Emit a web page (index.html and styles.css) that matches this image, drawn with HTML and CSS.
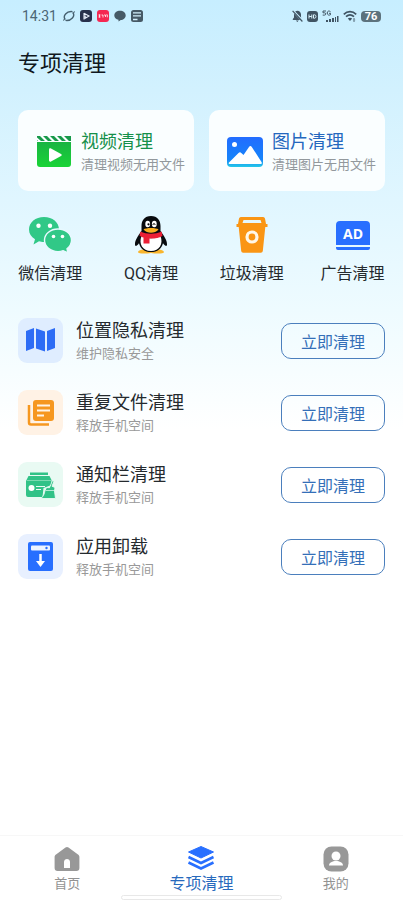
FILE: index.html
```html
<!DOCTYPE html>
<html lang="zh-CN">
<head>
<meta charset="utf-8">
<meta name="viewport" content="width=device-width, initial-scale=1">
<title>专项清理</title>
<link rel="stylesheet" href="styles.css">
</head>
<body>
<div class="page">
  <header class="status">
    <div class="status-group">
      <span class="time">14:31</span>
      <svg width="12" height="12" viewBox="0 0 12 12" fill="none" stroke="#46606f"><path d="M2.200 9.500C-.5 6 3.500.8 9.500 1.600M9.800 2.500C12.500 6 8.500 11.200 2.500 10.400" stroke-width="1.400"/><path d="M.8 10.800c-.8-1 .2-2 1.400-1.300M11.200 1.200c.8 1-.2 2-1.400 1.300" stroke-width=".9"/></svg>
      <svg width="12" height="12" viewBox="0 0 12 12"><rect width="12" height="12" rx="3" fill="#28304c"/><path d="M4 3v6.500M4 3.200L9 6 5.200 8.300V5.500" fill="none" stroke="#e8edfa" stroke-width="1.100"/></svg>
      <svg width="12" height="12" viewBox="0 0 12 12"><rect width="12" height="12" rx="3" fill="#f52752"/><path d="M1.500 5h2M1.500 7h2M2.500 4.500v3M4.500 5h1.500v2.500M7 5h1.500v2M9.300 4.800h1v2.500" fill="none" stroke="#fff" stroke-width=".8"/></svg>
      <svg width="12" height="12" viewBox="0 0 12 12"><path d="M6 .8c3.200 0 5.700 2 5.700 4.600S9.200 10 6.800 10L4.500 11.600V9.800C2 9.300.3 7.600.3 5.400.3 2.800 2.800.8 6 .8z" fill="#465965"/></svg>
      <svg width="12" height="12" viewBox="0 0 12 12"><rect width="12" height="12" rx="2.500" fill="#465965"/><path d="M2 2.800h8M2 5.800h8M2 9.500h4.500" stroke="#d2effb" stroke-width="1.300"/></svg>
    </div>
    <div class="status-group status-right">
      <svg width="11" height="12" viewBox="0 0 11 12"><path d="M3.200 1.500C5.500-.2 9 1.200 9 4.500v2.700l.7 1zM2 3.500L8.200 10H.8V9L2 7.500zM3.800 10.600h3L5.300 12z" fill="#405463"/><path d="M.6.8l9.800 10.700" stroke="#405463" stroke-width="1.200"/></svg>
      <svg width="11" height="11" viewBox="0 0 11 11"><rect width="11" height="11" rx="3" fill="#405463"/><path d="M2 3.500v4M4.800 3.500v4M2 5.500h2.800M6.500 3.800v3.400h1.200c1.700 0 1.700-3.400 0-3.400z" fill="none" stroke="#d8f1fb"/></svg>
      <svg width="17" height="13" viewBox="0 0 17 13"><path d="M4 1H1v1.800h1.500c1.700 0 1.700 2.300 0 2.300H.7M8.500 1.700C7 .4 5.200 1.100 5.200 3s1.800 2.700 3.300 1.700V3.300H7" fill="none" stroke="#405463"/><path d="M4 10h2v2H4zM7 9h2v3H7zM10 8h2v4h-2zM13 7h1v5h-1zM15 6h1.500v6H15z" fill="#405463"/></svg>
      <svg width="14" height="12" viewBox="0 0 14 12"><path d="M.8 4.300C4.500.7 9.500.7 13.200 4.300M3 6.700c2.400-2.200 5.600-2.200 8 0" fill="none" stroke="#405463" stroke-width="1.700"/><path d="M4.800 8.600c1.400-1 3-1 4.400 0L7 11zM11 8l1.400 1.500H9.800zM11 12l1.400-1.500H9.800z" fill="#405463"/></svg>
      <span class="battery">76</span>
    </div>
  </header>

  <main>
    <h1>专项清理</h1>

    <section class="cards">
      <a class="card" href="#video">
        <svg width="38" height="38" viewBox="0 0 38 38">
          <defs><linearGradient id="green" x2="0" y2="1"><stop stop-color="#19b443"/><stop offset="1" stop-color="#19d436"/></linearGradient></defs>
          <path d="M2 9h34v22a3 3 0 0 1-3 3H5a3 3 0 0 1-3-3z" fill="url(#green)"/>
          <path d="M2 3h3l5 5H6L2 4.500zM8 3h4l5 5h-4zM15 3h4l5 5h-4zM22 3h4l5 5h-4zM29 3h7v5h-2zM2 7l1 1H2z" fill="#17994a"/>
          <path d="M14 16.500c0-1 1-1.500 2-1l10 5.500c1 .6 1 1.400 0 2l-10 5.500c-1 .5-2 0-2-1z" fill="#fff"/>
        </svg>
        <span class="copy"><b class="green">视频清理</b><small>清理视频无用文件</small></span>
      </a>
      <a class="card" href="#image">
        <svg width="38" height="38" viewBox="0 0 38 38">
          <defs><linearGradient id="sky" x2="0" y2="1"><stop stop-color="#226cff"/><stop offset=".75" stop-color="#1684fa"/><stop offset="1" stop-color="#25c9e8"/></linearGradient></defs>
          <rect x="1" y="4" width="36" height="30" rx="4" fill="url(#sky)"/>
          <circle cx="8.500" cy="11.500" r="2.500" fill="#fff"/>
          <path d="M3.500 31c-1 0-1-1-.5-1.600l9.500-9.500c1-.9 2-.9 2.800 0l2.200 2 5.500-8c.8-1.100 2-1.100 2.800 0L35.500 29c.6 1 .2 2-.8 2z" fill="#fff"/>
        </svg>
        <span class="copy"><b class="blue">图片清理</b><small>清理图片无用文件</small></span>
      </a>
    </section>

    <nav class="quick" aria-label="快捷清理">
      <a href="#wechat">
        <svg width="44" height="38" viewBox="0 0 44 38">
          <path d="M16 1c8.500 0 15 5.400 15 12.500S24.500 26 16 26c-2 0-3.500-.2-5-.7L5.500 28.500 7 23.300C3.200 21 1 17.500 1 13.500 1 6.400 7.500 1 16 1z" fill="#31c887"/>
          <path d="M30 13c7.500 0 13.500 5 13.500 11.300 0 3.500-1.800 6.400-4.500 8.500l1 4.200-4.800-2.300c-1.600.6-3.400.9-5.200.9-7.500 0-13.500-5-13.500-11.300S22.500 13 30 13z" fill="#31c887" stroke="#e8f9ff" stroke-width="1.400"/>
          <g fill="#fff"><circle cx="10.500" cy="9.700" r="2.200"/><circle cx="22" cy="9.700" r="2.200"/><circle cx="25.500" cy="20.500" r="1.800"/><circle cx="34.500" cy="20.500" r="1.800"/></g>
        </svg>
        <span>微信清理</span>
      </a>
      <a href="#qq">
        <svg width="34" height="38" viewBox="0 0 34 38">
          <path d="M4 36.300c0-2.500 5-3.300 13-3.300s13 .8 13 3.300c0 1.500-8 1.700-13 .7-5 1-13 .8-13-.7z" fill="#f9b52d"/>
          <path d="M17 0C10.500 0 7.500 4.500 7.500 10v5C4 20 1 24 1 28c0 3 1.500 2.500 4-.8C6.500 33 10.500 36 17 36s10.500-3 12-8.800c2.500 3.300 4 3.800 4 .8 0-4-3-8-6.500-13v-5C26.500 4.500 23.500 0 17 0z" fill="#080b0e"/>
          <path d="M7.500 20c5 3 14 3 19 0 3 8-1 15-9.500 15S4.500 28 7.500 20z" fill="#fff"/>
          <ellipse cx="13.700" cy="8" rx="2.400" ry="3.300" fill="#fff"/><ellipse cx="20.300" cy="8" rx="2.400" ry="3.300" fill="#fff"/>
          <circle cx="14.500" cy="8.300" r="1.100"/><path d="M19 9c0-2 2-2 2 0" fill="none" stroke="#000"/>
          <path d="M9.500 13.500c2-2 13-2 15 0-2 2.500-4.500 3.200-7.500 3.200s-5.500-.7-7.500-3.200z" fill="#f8ae20"/>
          <path d="M6.500 15.500c6 3 15 3 21 0l1 4.500c-4 2-8 2.700-13 2.500v5H9.500v-6c-1.500-.4-2.500-1-4-2z" fill="#ec1f35"/>
        </svg>
        <span>QQ清理</span>
      </a>
      <a href="#trash">
        <svg width="34" height="38" viewBox="0 0 34 38">
          <path d="M6 1h22a2 2 0 0 1 2 1.500L31 8h1.500v3h-2.200l-2.500 24a2 2 0 0 1-2 1.800H8.200a2 2 0 0 1-2-1.800L3.700 11H1.500V8H3l1-5.500A2 2 0 0 1 6 1zM8.500 4L7.500 7h19l-1-3z" fill="#fa9514" fill-rule="evenodd"/>
          <circle cx="17" cy="21" r="5" fill="none" stroke="#fff7e8" stroke-width="3.200"/>
        </svg>
        <span>垃圾清理</span>
      </a>
      <a href="#ads">
        <svg width="34" height="38" viewBox="0 0 34 38">
          <path d="M4 5h26a4 4 0 0 1 4 4v20H0V9a4 4 0 0 1 4-4zM0 31h34v1a2 2 0 0 1-2 2H2a2 2 0 0 1-2-2z" fill="#286fff"/>
          <text class="ad" x="17" y="23" text-anchor="middle">AD</text>
        </svg>
        <span>广告清理</span>
      </a>
    </nav>

    <ul class="tasks">
      <li>
        <span class="tile tile-blue"><svg width="31" height="31" viewBox="0 0 31 31" fill="#2d6cf5"><path d="M1 6l8-3v20l-8 3zM11 3.500l9 3v20l-9-3zM22 6l8-3v20l-8 3z"/></svg></span>
        <div class="copy"><h2>位置隐私清理</h2><p>维护隐私安全</p></div>
        <button type="button">立即清理</button>
      </li>
      <li>
        <span class="tile tile-orange"><svg width="31" height="31" viewBox="0 0 31 31"><rect x="8" y="3" width="21" height="21" rx="3" fill="#f6971f"/><path d="M4 8v17.500a2 2 0 0 0 2 2h18" fill="none" stroke="#f6971f" stroke-width="2.500"/><path d="M12 8.500h13M12 13.500h13M12 18.500h7" stroke="#fff4e5" stroke-width="2"/></svg></span>
        <div class="copy"><h2>重复文件清理</h2><p>释放手机空间</p></div>
        <button type="button">立即清理</button>
      </li>
      <li>
        <span class="tile tile-green"><svg width="31" height="31" viewBox="0 0 31 31"><path d="M5 3.500h18v2.500H5zM3.500 7h21l2 4v5l-8 3-1 9H3a2 2 0 0 1-2-2V12z" fill="#31c287"/><path d="M2 11.500h24" stroke="#8fe0bd" stroke-width=".8"/><circle cx="6.500" cy="19" r="3" fill="#fff"/><path d="M11 17.500h9M11 20.500h5" stroke="#e9faf3"/><path d="M27.500 11.500l1.500.7-2 5 3 1.300-.5 3.500 1 7.500H16c2.500-2.500 3.500-5 4-8l1.500-3 3 .2z" fill="#31c287" stroke="#e9faf3" stroke-width=".9"/><path d="M20.500 21.500h9" stroke="#e9faf3" stroke-width=".7"/></svg></span>
        <div class="copy"><h2>通知栏清理</h2><p>释放手机空间</p></div>
        <button type="button">立即清理</button>
      </li>
      <li>
        <span class="tile tile-indigo"><svg width="31" height="31" viewBox="0 0 31 31"><rect x="3" y="1" width="25" height="29" rx="2" fill="#286fff"/><rect x="6" y="4.500" width="19" height="5" rx="1" fill="#edf4ff"/><circle cx="21.500" cy="7" r="1.200" fill="#286fff"/><path d="M15.500 13v9" stroke="#fff" stroke-width="2.500"/><path d="M11 20h9l-4.500 6z" fill="#fff"/></svg></span>
        <div class="copy"><h2>应用卸载</h2><p>释放手机空间</p></div>
        <button type="button">立即清理</button>
      </li>
    </ul>
  </main>

  <nav class="tabs" aria-label="主导航">
    <a href="#home">
      <svg width="28" height="28" viewBox="0 0 28 28"><path d="M12.500 2.500c1-.7 2-.7 3 0L25 9.500c1 .7 1.400 1.500 1.400 2.600V23a3 3 0 0 1-3 3H4.600a3 3 0 0 1-3-3V12.100c0-1.100.4-1.900 1.400-2.600z" fill="#989898"/><path d="M11 23v-6c0-4 6-4 6 0v6z" fill="#fff"/></svg>
      <span>首页</span>
    </a>
    <a class="active" href="#special" aria-current="page">
      <svg width="28" height="28" viewBox="0 0 28 28"><path d="M14 1.500L26.500 7 14 13 1.500 7z" fill="#286fff" stroke="#286fff" stroke-linejoin="round"/><path d="M1.500 12L14 18l12.500-6M1.500 17.500L14 23.500l12.500-6" fill="none" stroke="#286fff" stroke-width="2.500"/></svg>
      <span>专项清理</span>
    </a>
    <a href="#mine">
      <svg width="28" height="28" viewBox="0 0 28 28"><rect x="1.500" y="1.500" width="25" height="25" rx="8" fill="#989898"/><circle cx="14" cy="11" r="4.500" fill="#fff"/><path d="M7 20.500c0-6 14-6 14 0z" fill="#fff"/></svg>
      <span>我的</span>
    </a>
    <i class="handle"></i>
  </nav>
</div>
</body>
</html>
```
FILE: styles.css
```css
* { box-sizing: border-box; }
body {
  margin: 0;
  font-family: Roboto, "Noto Sans CJK SC", sans-serif;
  color: #252a2e;
}
a { color: inherit; text-decoration: none; }
svg { display: block; flex: none; }
.page {
  display: flex;
  flex-direction: column;
  min-height: 100vh;
  background: linear-gradient(#c7eeff 0, #d2f1fe 90px, #e0f6ff 200px, #eefbff 310px, #fff 430px);
}
main { flex: 1; }

.status {
  display: flex;
  justify-content: space-between;
  align-items: center;
  height: 32px;
  padding: 0 22px;
}
.status-group { display: flex; align-items: center; gap: 5px; }
.status-right { gap: 4px; }
.time { width: 36px; font-size: 14px; line-height: 20px; color: #4c6675; }
.battery {
  width: 20px;
  border-radius: 4px;
  background: #5c727d;
  color: #fff;
  font-size: 11px;
  font-weight: 700;
  line-height: 11px;
  text-align: center;
}

h1 {
  margin: 16px 18px 30px;
  font-size: 22px;
  font-weight: 400;
  line-height: 32px;
  color: #101820;
}

.cards {
  display: grid;
  grid-template-columns: 1fr 1fr;
  gap: 15px;
  padding: 0 18px;
}
.card {
  display: flex;
  align-items: center;
  gap: 8px;
  height: 81px;
  padding: 2px 0 0 17px;
  border-radius: 10px;
  background: #fafeff;
  white-space: nowrap;
}
.copy { display: flex; flex-direction: column; }
.card b { font-size: 18px; font-weight: 400; line-height: 26px; }
.card small { font-size: 13px; line-height: 20px; color: #92989c; }
.card .green { color: #15904a; }
.card .blue { color: #2467be; }

.quick {
  display: grid;
  grid-template-columns: repeat(4, 1fr);
  margin-top: 25px;
  font-size: 16px;
  line-height: 24px;
}
.quick a {
  display: flex;
  flex-direction: column;
  align-items: center;
  gap: 8px;
}
.ad { font: 700 14px "Open Sans", sans-serif; fill: #fff; }

.tasks {
  display: flex;
  flex-direction: column;
  gap: 27px;
  margin: 32px 0 24px;
  padding: 0 18px;
  list-style: none;
}
.tasks li { display: flex; align-items: center; height: 45px; }
.tile {
  display: grid;
  place-items: center;
  width: 45px;
  height: 45px;
  margin-right: 13px;
  border-radius: 9px;
}
.tile-blue { background: #dfedff; }
.tile-orange { background: #fff2e5; }
.tile-green { background: #e9faf3; }
.tile-indigo { background: #e8f0ff; }
.tasks .copy { flex: 1; }
h2 { margin: 0; font-size: 18px; font-weight: 400; line-height: 26px; }
p { margin: 0; font-size: 13px; line-height: 20px; color: #999; }
button {
  width: 104px;
  height: 36px;
  padding: 0;
  border: 1px solid #4b7fbd;
  border-radius: 10px;
  background: transparent;
  color: #346fb8;
  font: inherit;
  font-size: 16px;
}

.tabs {
  position: relative;
  display: grid;
  grid-template-columns: repeat(3, 1fr);
  height: 65px;
  padding-top: 9px;
  border-top: 1px solid #f7f7f7;
  background: #fff;
  color: #929292;
  font-size: 13px;
  line-height: 22px;
}
.tabs a { display: flex; flex-direction: column; align-items: center; }
.tabs .active { color: #286abd; font-size: 16px; }
.handle {
  position: absolute;
  bottom: 0;
  left: 30%;
  width: 40%;
  height: 5px;
  border: 1px solid #e8e8e8;
  border-radius: 3px;
  background: #fff;
}
```
